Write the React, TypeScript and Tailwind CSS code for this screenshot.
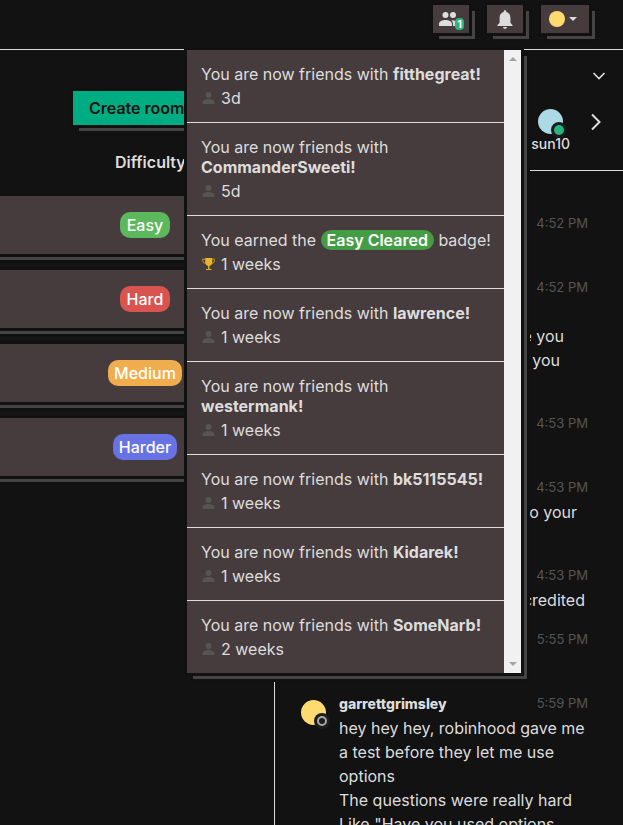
import type { ReactNode } from "react";

const raised =
  "shadow-[0_0_0_3px_#111111,6px_6px_0_0_#444444,6px_6px_0_3px_#111111]";

function PersonIcon() {
  return (
    <svg viewBox="0 0 14 14" className="h-[14px] w-[14px] shrink-0" fill="#555555" aria-hidden="true">
      <circle cx="7.500" cy="4" r="3" />
      <path d="M1.500 13v-1.500c0-2 3-3.500 6-3.500s6 1.500 6 3.500V13z" />
    </svg>
  );
}

function TrophyIcon() {
  return (
    <svg viewBox="0 0 14 14" className="h-[14px] w-[14px] shrink-0" aria-hidden="true">
      <path d="M4.200 1h7.100v4.500c0 1.800-1.200 3.200-2.900 3.500v3h2.100v1H5v-1h2.100V9C5.400 8.700 4.200 7.300 4.200 5.500z" fill="#e8b52c" />
      <path d="M4.300 2.200H1.500c0 2.300 1 4 3.300 4.300M11.200 2.200h2.600c0 2.300-.9 4-3.100 4.300" fill="none" stroke="#c9961f" />
    </svg>
  );
}

type Notice = { who?: string; age: string };

const notices: Notice[] = [
  { who: "fitthegreat!", age: "3d" },
  { who: "CommanderSweeti!", age: "5d" },
  { age: "1 weeks" },
  { who: "lawrence!", age: "1 weeks" },
  { who: "westermank!", age: "1 weeks" },
  { who: "bk5115545!", age: "1 weeks" },
  { who: "Kidarek!", age: "1 weeks" },
  { who: "SomeNarb!", age: "2 weeks" },
];

function Notifications() {
  return (
    <div className={`absolute top-[50px] right-[102px] z-10 flex w-[334px] bg-[#473c3d] ${raised}`}>
      <ul className="min-w-0 flex-1 divide-y divide-[#dddddd] leading-5">
        {notices.map((n, i) => (
          <li key={i} className="p-[14px]">
            {n.who ? (
              <p>
                You are now friends with <strong className="font-bold">{n.who}</strong>
              </p>
            ) : (
              <p className="whitespace-nowrap">
                You earned the{" "}
                <span className="rounded-full bg-[#449d44] px-[6px] font-semibold text-white">Easy Cleared</span>{" "}
                badge!
              </p>
            )}
            <p className="mt-1 flex items-center gap-[6px]">
              {n.who ? <PersonIcon /> : <TrophyIcon />}
              {n.age}
            </p>
          </li>
        ))}
      </ul>
      <div className="flex w-[17px] flex-col items-center justify-between bg-[#f1f1f1] py-[7px]">
        <svg viewBox="0 0 8 4" className="h-1 w-2" fill="#a3a3a3" aria-hidden="true">
          <path d="M0 4l4-4 4 4z" />
        </svg>
        <svg viewBox="0 0 8 4" className="h-1 w-2" fill="#a3a3a3" aria-hidden="true">
          <path d="M0 0l4 4 4-4z" />
        </svg>
      </div>
    </div>
  );
}

function HeaderButton({ label, wide, children }: { label: string; wide?: boolean; children: ReactNode }) {
  return (
    <button
      type="button"
      aria-label={label}
      className={`relative flex h-7 items-center bg-[#473c3d] ${wide ? "w-12 gap-1 pl-2" : "w-9 justify-center"} ${raised}`}
    >
      {children}
    </button>
  );
}

function Header() {
  return (
    <header className="relative flex h-[50px] shrink-0 items-start justify-end gap-[18px] border-b border-[#dddddd] pt-[5px] pr-[34px]">
      <HeaderButton label="Friends">
        <svg viewBox="0 0 20 16" className="mr-1 h-4 w-5" fill="#dddddd" aria-hidden="true">
          <circle cx="6.500" cy="4" r="3" />
          <circle cx="14" cy="4" r="3" />
          <path d="M0 15v-2c0-2.700 3.400-4 6.500-4s6.500 1.300 6.500 4v2zM14 15v-2c0-1.500-.6-2.800-1.700-3.800 3 0 7.200 1 7.200 3.800v2z" />
        </svg>
        <span className="absolute right-[5px] bottom-[3px] flex h-3 w-[9px] items-center justify-center rounded bg-[#28b47c] text-[11px] font-bold text-white">
          1
        </span>
      </HeaderButton>
      <HeaderButton label="Notifications">
        <svg viewBox="0 0 16 19" className="h-[19px] w-4" fill="#dddddd" aria-hidden="true">
          <path d="M8 .300c.8 0 1.300.6 1.300 1.300v.5c2.500.6 4.100 2.700 4.100 5.600v5L15.500 15v1H.500v-1l2.100-2.300v-5c0-2.900 1.600-5 4.100-5.600v-.500C6.700.900 7.200.300 8 .300zM6 17h4c0 1-.9 1.800-2 1.800S6 18 6 17z" />
        </svg>
      </HeaderButton>
      <HeaderButton label="Account" wide>
        <span className="h-4 w-4 rounded-full bg-[#fddb71]" />
        <svg viewBox="0 0 8 4" className="h-1 w-2" fill="#dddddd" aria-hidden="true">
          <path d="M0 0l4 4 4-4z" />
        </svg>
      </HeaderButton>
      <Notifications />
    </header>
  );
}

const rooms = [
  { level: "Easy", tone: "bg-[#5cb85c]" },
  { level: "Hard", tone: "bg-[#d9534f]" },
  { level: "Medium", tone: "bg-[#f0ad4e]" },
  { level: "Harder", tone: "bg-[#6772e5]" },
];

function Rooms() {
  return (
    <main className="min-w-0 flex-1 overflow-hidden pt-[41px]">
      <div className="flex justify-end pr-[75px]">
        <button
          type="button"
          className={`h-[34px] w-[126px] bg-[#00ad83] pl-4 text-left font-semibold text-[#121212] ${raised}`}
        >
          Create room
        </button>
      </div>
      <h2 className="mt-[25px] pl-[115px] font-semibold">Difficulty</h2>
      <ul className="mt-[22px] -ml-3 flex flex-col gap-4 bg-[#151515]">
        {rooms.map((r) => (
          <li key={r.level} className={`flex h-[58px] items-center bg-[#473c3d] pl-3 ${raised}`}>
            <div className="flex w-[290px] shrink-0 justify-center">
              <span
                className={`min-w-[50px] rounded-[10px] px-[6px] py-px text-center font-medium text-white ${r.tone}`}
              >
                {r.level}
              </span>
            </div>
          </li>
        ))}
      </ul>
    </main>
  );
}

type Line = { text: string; place: string };
type Message = { name?: string; time: string; lines: Line[] };

const blank: Line = { text: "", place: "" };

const messages: Message[] = [
  { time: "4:52 PM", lines: [blank] },
  {
    time: "4:52 PM",
    lines: [blank, { text: "e you", place: "pr-6 text-right" }, { text: "you", place: "pr-7 text-right" }, blank],
  },
  { time: "4:53 PM", lines: [blank] },
  { time: "4:53 PM", lines: [{ text: "o your", place: "pr-[11px] text-right" }, blank] },
  { time: "4:53 PM", lines: [{ text: "credited", place: "pr-[3px] text-right" }] },
  { time: "5:55 PM", lines: [blank] },
  {
    name: "garrettgrimsley",
    time: "5:59 PM",
    lines: [
      { text: "hey hey hey, robinhood gave me a test before they let me use options", place: "" },
      { text: "The questions were really hard", place: "" },
      { text: 'Like "Have you used options', place: "" },
    ],
  },
];

function Chat() {
  return (
    <aside className="flex w-[349px] shrink-0 flex-col overflow-hidden border-l border-[#dddddd]">
      <section className="flex h-[121px] shrink-0 flex-col border-b border-[#dddddd]">
        <div className="flex justify-end pt-[14px] pr-[17px]">
          <button type="button" aria-label="Collapse" className="flex h-6 w-[14px] items-center justify-center">
            <svg viewBox="0 0 14 8" className="h-2 w-[14px]" fill="none" stroke="#dddddd" strokeWidth="1.600" aria-hidden="true">
              <path d="M1.500 1L7 6.500 12.500 1" />
            </svg>
          </button>
        </div>
        <div className="flex items-start justify-end gap-[21px] pt-[21px] pr-[22px]">
          <div className="flex flex-col items-center">
            <span className="relative h-[25px] w-[25px] rounded-full bg-[#add8e6]">
              <span className="absolute -right-1 -bottom-1 h-4 w-4 rounded-full border-3 border-[#1d1d1d] bg-[#28b47c]" />
            </span>
            <span className="text-sm font-medium">sun10</span>
          </div>
          <button type="button" aria-label="More friends" className="flex h-[26px] w-[10px] items-center">
            <svg viewBox="0 0 10 18" className="h-[18px] w-[10px]" fill="none" stroke="#dddddd" strokeWidth="2" aria-hidden="true">
              <path d="M1 1.500L8.500 9 1 16.500" />
            </svg>
          </button>
        </div>
      </section>
      <ol className="flex flex-col gap-4 pt-[41px] pr-[35px] pl-[26px]">
        {messages.map((m, i) => (
          <li key={i} className="flex gap-[13px]">
            <div className="w-[25px] shrink-0 pt-2">
              {m.name && (
                <span className="relative block h-[25px] w-[25px] rounded-full bg-[#fddb71]">
                  <span className="absolute -right-1 -bottom-1 flex h-4 w-4 items-center justify-center rounded-full bg-[#1d1d1d]">
                    <span className="h-[10px] w-[10px] rounded-full border-2 border-[#aaaaaa]" />
                  </span>
                </span>
              )}
            </div>
            <div className="min-w-0 flex-1">
              <div className="flex h-6 items-center">
                {m.name && <strong className="text-sm font-extrabold">{m.name}</strong>}
                <time className="ml-auto text-[13px] text-[#555555]">{m.time}</time>
              </div>
              {m.lines.map((l, j) => (
                <p key={j} className={`min-h-6 ${l.place}`}>
                  {l.text}
                </p>
              ))}
            </div>
          </li>
        ))}
      </ol>
    </aside>
  );
}

export default function App() {
  return (
    <div className="flex h-screen flex-col overflow-hidden bg-[#121212] font-['Inter',sans-serif] text-base text-[#dddddd]">
      <Header />
      <div className="flex min-h-0 flex-1">
        <Rooms />
        <Chat />
      </div>
    </div>
  );
}
